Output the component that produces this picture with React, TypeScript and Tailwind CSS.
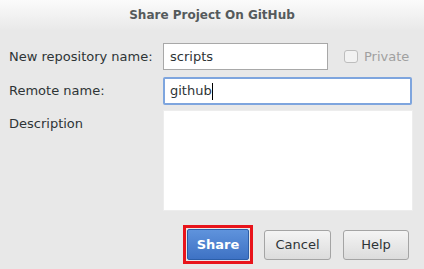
import React from "react";

const font = { fontFamily: '"DejaVu Sans", "Liberation Sans", sans-serif' };

const App: React.FC = () => {
  return (
    <div
      className="w-[424px] h-[269px] bg-[#e8e8e8] text-[#2e3436] text-[13px] overflow-hidden flex flex-col"
      style={font}
    >
      {/* Title bar */}
      <div className="h-[30px] bg-gradient-to-b from-[#fbfbfb] to-[#e9e9e9] flex items-center justify-center">
        <p className="font-bold text-[#555a5c] text-[12px]">Share Project On GitHub</p>
      </div>

      {/* Form */}
      <div className="flex flex-col pl-[9px] pt-[13px]">
        <div className="flex items-center h-[27px]">
          <span className="w-[154px]">New repository name:</span>
          <div className="w-[165px] h-[27px] bg-white border border-[#a8a8a8] flex items-center px-[6px]">
            scripts
          </div>
          <label className="flex items-center ml-[16px] text-[#a0a0a0]">
            <span className="w-[14px] h-[13px] border border-[#bdbdbd] rounded-[3px] bg-[#f2f2f2] mr-[6px]" />
            Private
          </label>
        </div>

        <div className="flex items-center h-[28px] mt-[7px]">
          <span className="w-[154px]">Remote name:</span>
          <div className="w-[249px] h-[28px] bg-white border-2 border-[#7ea5de] rounded-[2px] flex items-center px-[5px]">
            github<span className="w-px h-[17px] bg-black" />
          </div>
        </div>

        <div className="flex mt-[5px]">
          <span className="w-[154px] pt-[4px]">Description</span>
          <div className="w-[250px] h-[101px] bg-white border border-[#ededed]" />
        </div>
      </div>

      {/* Buttons */}
      <div className="flex items-center justify-end pr-[15px] mt-[14px]">
        <div className="border-[3px] border-[#e8141b] p-[1px] mr-[11px]">
          <button className="w-[62px] h-[31px] rounded-[2px] bg-gradient-to-b from-[#5f93dc] to-[#3e72c4] border border-[#2c5ea8] text-white font-bold">
            Share
          </button>
        </div>
        <button className="w-[67px] h-[30px] rounded-[3px] bg-gradient-to-b from-[#f4f4f4] to-[#dcdcdc] border border-[#a4a4a4] mr-[12px]">
          Cancel
        </button>
        <button className="w-[66px] h-[30px] rounded-[3px] bg-gradient-to-b from-[#f4f4f4] to-[#dcdcdc] border border-[#a4a4a4]">
          Help
        </button>
      </div>
    </div>
  );
};

export default App;
